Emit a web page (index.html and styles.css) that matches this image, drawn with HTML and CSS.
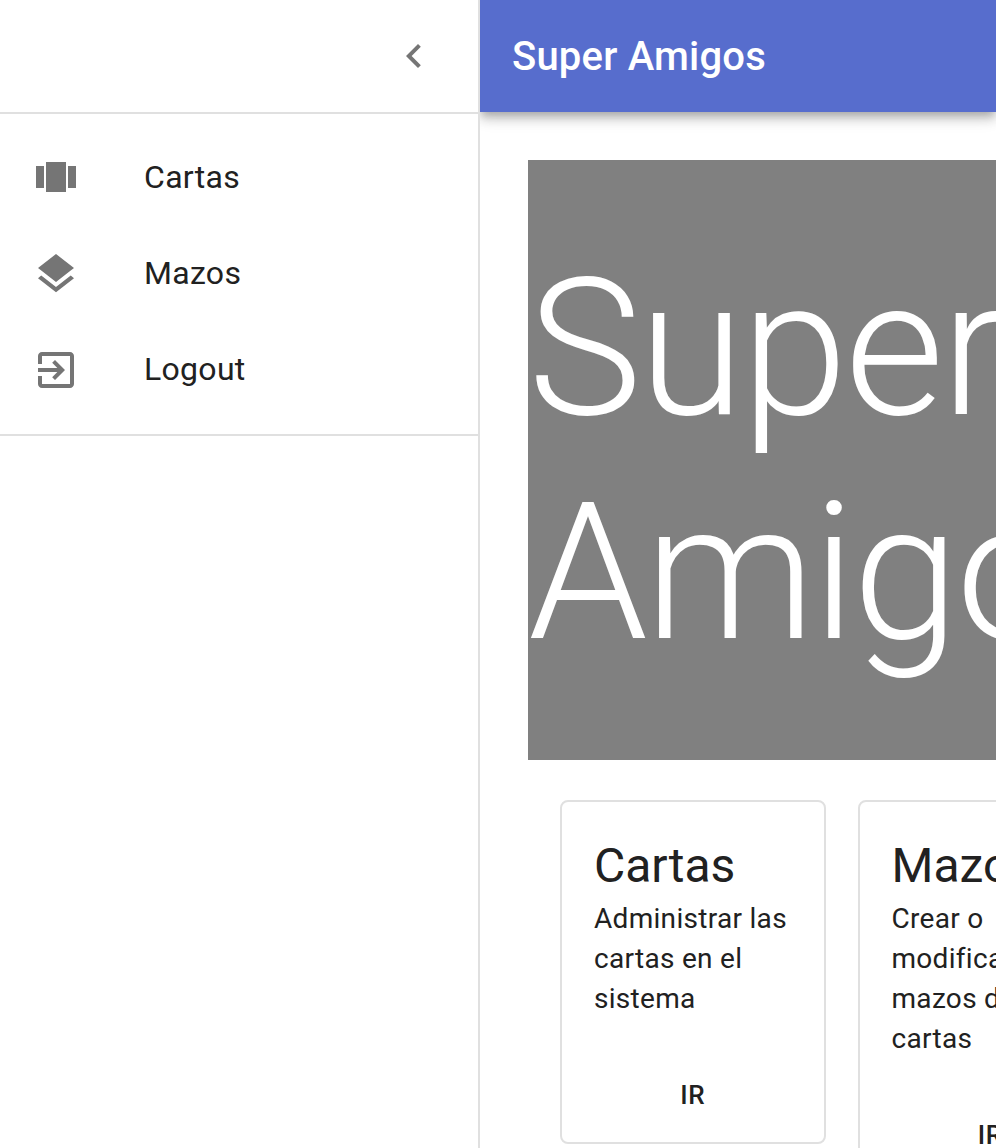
FILE: index.html
```html
<!DOCTYPE html>
<html lang="es">
<head>
<meta charset="utf-8">
<title>Super Amigos</title>
<link rel="stylesheet" href="styles.css">
</head>
<body>
<div class="app">
  <aside class="drawer">
    <div class="drawer-header">
      <svg class="icon" viewBox="0 0 24 24"><path d="M15.41 7.41L14 6l-6 6 6 6 1.41-1.41L10.83 12z"/></svg>
    </div>
    <nav class="nav">
      <a class="nav-item"><svg class="icon" viewBox="0 0 24 24"><path d="M7 19h10V4H7v15zm-5-2h4V6H2v11zM18 6v11h4V6h-4z"/></svg><span class="nav-label">Cartas</span></a>
      <a class="nav-item"><svg class="icon" viewBox="0 0 24 24"><path d="M11.99 18.54l-7.37-5.73L3 14.07l9 7 9-7-1.63-1.27-7.38 5.74zM12 16l7.36-5.73L21 9l-9-7-9 7 1.63 1.27L12 16z"/></svg><span class="nav-label">Mazos</span></a>
      <a class="nav-item"><svg class="icon" viewBox="0 0 24 24"><path d="M10.09 15.59L11.5 17l5-5-5-5-1.41 1.41L12.67 11H3v2h9.67l-2.58 2.59zM19 3H5c-1.11 0-2 .9-2 2v4h2V5h14v14H5v-4H3v4c0 1.1.89 2 2 2h14c1.1 0 2-.9 2-2V5c0-1.1-.9-2-2-2z"/></svg><span class="nav-label">Logout</span></a>
    </nav>
  </aside>
  <div class="page">
    <header class="appbar">Super Amigos</header>
    <main class="content">
      <section class="hero"><h1>Super Amigos</h1></section>
      <section class="cards">
        <article class="card">
          <h2>Cartas</h2>
          <p>Administrar las cartas en el sistema</p>
          <button class="action">IR</button>
        </article>
        <article class="card card-tall">
          <h2>Mazos</h2>
          <p>Crear o modificar mazos de cartas</p>
          <button class="action">IR</button>
        </article>
      </section>
    </main>
  </div>
</div>
</body>
</html>
```
FILE: styles.css
```css
* { box-sizing: border-box; }
body {
  margin: 0;
  font-family: Roboto, sans-serif;
  color: #212121;
  background: #fff;
}
.app { display: flex; height: 1148px; overflow: hidden; }
.drawer {
  position: relative;
  z-index: 2;
  flex: 0 0 480px;
  border-right: 2px solid #e0e0e0;
  background: #fff;
}
.drawer-header {
  display: flex;
  align-items: center;
  justify-content: flex-end;
  height: 114px;
  padding-right: 40px;
  border-bottom: 2px solid #e0e0e0;
}
.icon { width: 48px; height: 48px; fill: #757575; }
.nav { padding: 16px 0; border-bottom: 2px solid #e0e0e0; }
.nav-item {
  display: flex;
  align-items: center;
  gap: 64px;
  height: 96px;
  padding-left: 32px;
  font-size: 32px;
  letter-spacing: 0.3px;
}
.nav-label { padding-bottom: 2px; }
.page { flex: 1; min-width: 0; }
.appbar {
  position: relative;
  height: 112px;
  padding: 1px 0 0 32px;
  line-height: 112px;
  font-size: 40px;
  font-weight: 500;
  letter-spacing: 0.2px;
  color: #fff;
  background: #576dcd;
  box-shadow: 0 4px 8px -2px rgba(0, 0, 0, 0.2), 0 8px 10px rgba(0, 0, 0, 0.14), 0 2px 20px rgba(0, 0, 0, 0.12);
}
.content { width: 1000px; padding: 48px; }
.hero {
  display: flex;
  align-items: center;
  width: 700px;
  height: 600px;
  padding-top: 2px;
  color: #fff;
  background: #808080;
}
.hero h1 {
  margin: 0;
  width: 640px;
  font-size: 192px;
  font-weight: 300;
  line-height: 224px;
  letter-spacing: -3px;
}
.cards { display: flex; align-items: flex-start; gap: 32px; padding: 40px 32px; }
.card {
  display: flex;
  flex-direction: column;
  width: 265.5px;
  height: 344px;
  padding: 32px 32px 31px;
  border: 2px solid #e0e0e0;
  border-radius: 8px;
}
.card-tall { height: 384px; }
.card h2 { margin: 0; font-size: 48px; font-weight: 400; line-height: 64px; }
.card p { margin: 1px 0 0; font-size: 28px; line-height: 40px; letter-spacing: 0.3px; }
.action {
  margin-top: auto;
  padding: 0;
  border: 0;
  background: none;
  color: inherit;
  font: 500 26px/32px Roboto, sans-serif;
  letter-spacing: 0.7px;
}
```
